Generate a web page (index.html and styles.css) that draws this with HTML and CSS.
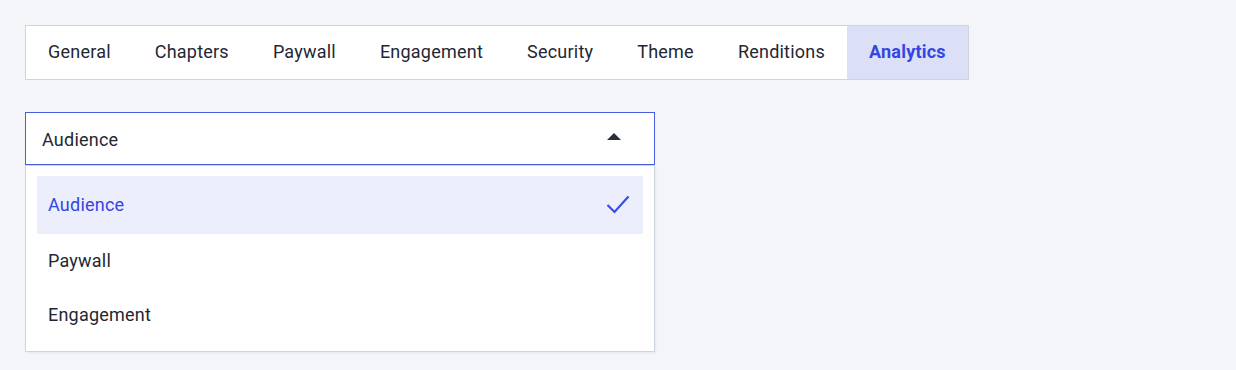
FILE: index.html
```html
<!DOCTYPE html>
<html lang="en">
<head>
    <meta charset="UTF-8">
    <meta name="viewport" content="width=device-width, initial-scale=1.0">
    <title>Analytics</title>
    <link rel="stylesheet" href="styles.css">
</head>
<body>
    <div class="page">
        <nav class="tabs">
            <a class="tab">General</a>
            <a class="tab">Chapters</a>
            <a class="tab">Paywall</a>
            <a class="tab">Engagement</a>
            <a class="tab">Security</a>
            <a class="tab">Theme</a>
            <a class="tab">Renditions</a>
            <a class="tab active">Analytics</a>
        </nav>

        <div class="select">
            <div class="select-box">
                <span>Audience</span>
                <span class="caret"></span>
            </div>
            <ul class="menu">
                <li class="option selected">
                    <span>Audience</span>
                    <svg class="check" width="24" height="19" viewBox="0 0 24 19">
                        <path d="M1.5 10 L8.5 17 L22.5 1.5" fill="none" stroke="currentColor" stroke-width="2.2"/>
                    </svg>
                </li>
                <li class="option"><span>Paywall</span></li>
                <li class="option"><span>Engagement</span></li>
            </ul>
        </div>
    </div>
</body>
</html>
```

FILE: styles.css
```css
body {
    margin: 0;
    background-color: #f4f5f9;
    font-family: Roboto, 'Liberation Sans', sans-serif;
    font-size: 18px;
    letter-spacing: 0.22px;
    color: #1f2733;
}
.page {
    padding: 25px;
}
.tabs {
    display: inline-flex;
    background: #fff;
    border: 1px solid #cfd5df;
}
.tab {
    display: flex;
    align-items: center;
    height: 51px;
    padding: 0 22px 2px;
    cursor: pointer;
}
.tab.active {
    background: #dce0f7;
    color: #3346e2;
    font-weight: bold;
}
.select {
    width: 630px;
    margin-top: 32px;
}
.select-box {
    display: flex;
    align-items: center;
    justify-content: space-between;
    height: 50px;
    padding: 1px 33px 0 16px;
    background: #fff;
    border: 1px solid #4a5fe0;
}
.caret {
    width: 0;
    height: 0;
    border-left: 7px solid transparent;
    border-right: 7px solid transparent;
    border-bottom: 7px solid #27303c;
    margin-top: -5px;
}
.menu {
    list-style: none;
    margin: 0;
    padding: 10px 11px 9px 11px;
    background: #fff;
    border: 1px solid #cfd5df;
    box-shadow: 1px 1px 2px rgba(0, 0, 0, 0.06);
}
.option {
    display: flex;
    align-items: center;
    justify-content: space-between;
    height: 56px;
    padding: 0 13px 0 11px;
}
.option.selected {
    background: #eceefb;
    color: #3346e2;
    height: 56px;
    padding-bottom: 2px;
}
.option + .option {
    height: 52px;
    padding-bottom: 2px;
}
.check {
    color: #3a4ee6;
}
```
